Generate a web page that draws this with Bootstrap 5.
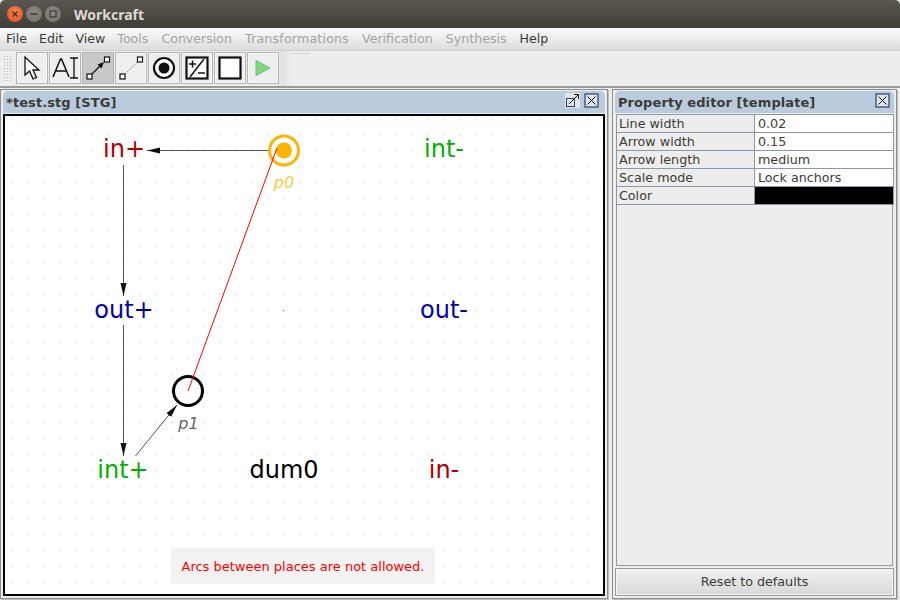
<!DOCTYPE html>
<html lang="en">
<head>
  <meta charset="UTF-8" />
  <meta name="viewport" content="width=device-width, initial-scale=1" />
  <title>Workcraft</title>
  <link href="https://cdn.jsdelivr.net/npm/bootstrap@5.3.2/dist/css/bootstrap.min.css" rel="stylesheet" />
  <style>
    html, body { height: 100%; }
    body { width: 900px; height: 600px; overflow: hidden; background: #ededed; font-family: "DejaVu Sans", sans-serif; font-size: 13px; color: #3c3b37; }
    /* window title */
    .wc-title { height: 28px; background: linear-gradient(#5a5750, #3f3d37); padding-left: 7px; border-radius: 5px 5px 0 0; }
    .wc-title-text { font-family: "Noto Sans", sans-serif; font-weight: 700; font-size: 14px; color: #dfdbd2; margin-left: 10px; }
    .wc-light { width: 16px; height: 16px; border-radius: 50%; margin-right: 3px; display: flex; }
    .wc-light-close { background: radial-gradient(circle at 50% 40%, #f28a5c, #dd4814); }
    .wc-light-other { background: radial-gradient(circle at 50% 40%, #8f8c84, #6f6c65); }
    /* menu */
    .wc-menu { height: 23px; background: linear-gradient(#fbfbfb, #dcdcdc); padding-left: 6px; gap: 13px; line-height: 22px; border-bottom: 1px solid #cfcfcf; font-size: 12.6px; }
    .wc-menu a { color: #3c3b37; text-decoration: none; }
    .wc-menu a.wc-off { color: #a3a3a0; }
    .wc-menu a.wc-tight { margin-left: -1px; }
    .wc-menu a.wc-wide { letter-spacing: .2px; }
    /* toolbar */
    .wc-toolbar { height: 37px; border-bottom: 2px solid #9a9a9a; background: #ededed; }
    .wc-toolbar-strip { width: 292px; height: 35px; background: linear-gradient(90deg, #ededed 275px, #e2e2e2 282px, #ededed 292px); padding: 1px 0 0 3px; }
    .wc-toolbar-line { width: 18px; height: 1px; margin-top: 2px; background: #d4d4d4; }
    .wc-grip { width: 10px; height: 28px; margin: 3px 3px 0 0; background-image: radial-gradient(#b5b5b5 40%, transparent 45%); background-size: 3px 3px; }
    .wc-tool { width: 32px; height: 32px; padding: 0; margin-right: 1px; border: 1px solid #b4b4b4; border-radius: 0; background: #eeeeee; display: flex; align-items: center; justify-content: center; box-shadow: inset 0 0 0 1px #f6f6f6; }
    .wc-tool-on { background: #c8c8c8; box-shadow: none; }
    /* dock panels */
    .wc-dock { height: 512px; padding: 1px 0; gap: 4px; }
    .wc-panel { border: 1px solid #8e8e8e; border-radius: 0; background: #ededed; padding: 1px 2px 2px; box-shadow: 1px 1px 0 #bdbdbd; }
    .wc-panel-left { width: 608px; }
    .wc-panel-right { width: 285px; }
    .wc-panel-right .wc-head { padding-right: 4px; }
    .wc-head { flex: none; height: 22px; background: #b9cbdc; border: 0; border-radius: 0; padding: 1px 6px 0 3px; font-weight: 700; color: #3c3b37; }
    .wc-head-name { letter-spacing: .08px; }
    .wc-canvas { position: relative; flex: none; height: 482px; margin-top: 1px; border: 2px solid #000; background: #fff; }
    .wc-canvas svg { display: block; }
    .wc-note { position: absolute; left: 166px; top: 432px; width: 264px; height: 36px; line-height: 38px; text-align: center; background: #f2f2f2; border-radius: 2px; color: #f00; font-size: 13px; }
    .wc-lbl { font-family: "DejaVu Sans", sans-serif; font-size: 24px; text-anchor: middle; }
    .wc-tag { font-family: "DejaVu Sans", sans-serif; font-size: 16px; font-style: italic; text-anchor: middle; }
    .wc-win-btn { width: 15px; height: 15px; display: block; margin-bottom: 4px; }
    /* property table */
    .wc-props { border: 1px solid #9a9a9a; margin: 1px 1px 0; }
    .wc-props table { margin: -1px 0 0 -1px; width: 278px; table-layout: fixed; border-color: #8b98a5; --bs-table-bg: transparent; --bs-table-color: #3c3b37; }
    .wc-props td { padding: 0 2px; height: 18px; line-height: 17px; font-size: 12.7px; border: 1px solid #8b98a5; }
    .wc-props td.wc-val { background: #fff; padding-left: 3px; }
    .wc-props td.wc-black { background: #000; }
    .wc-reset { flex: none; height: 28px; border: 1px solid #9a9a9a; border-radius: 0; padding: 0; margin-top: 2px; font-size: 12.7px; color: #3c3b37; background: linear-gradient(#f0f0f0, #d8d8d8); box-shadow: inset 0 0 0 1px #f4f4f4; }
  </style>
</head>
<body>
  <!-- window title bar -->
  <div class="wc-title d-flex align-items-center">
    <span class="wc-light wc-light-close align-items-center justify-content-center">
      <svg width="8" height="8" viewBox="0 0 8 8"><path d="M1.5 1.5l5 5M6.5 1.5l-5 5" stroke="#5a2008" stroke-width="1.3"/></svg>
    </span>
    <span class="wc-light wc-light-other align-items-center justify-content-center">
      <svg width="8" height="8" viewBox="0 0 8 8"><path d="M0.5 4h7" stroke="#3f3d37" stroke-width="1.6"/></svg>
    </span>
    <span class="wc-light wc-light-other align-items-center justify-content-center">
      <svg width="8" height="8" viewBox="0 0 8 8"><rect x="1" y="1" width="6" height="6" fill="none" stroke="#3f3d37" stroke-width="1.3"/></svg>
    </span>
    <span class="wc-title-text">Workcraft</span>
  </div>

  <!-- menu -->
  <div class="wc-menu d-flex">
    <a href="#">File</a><a href="#" class="wc-tight">Edit</a><a href="#" class="wc-tight">View</a>
    <a href="#" class="wc-off wc-tight">Tools</a><a href="#" class="wc-off">Conversion</a><a href="#" class="wc-off wc-wide">Transformations</a>
    <a href="#" class="wc-off">Verification</a><a href="#" class="wc-off">Synthesis</a><a href="#">Help</a>
  </div>

  <!-- toolbar -->
  <div class="wc-toolbar d-flex">
    <div class="wc-toolbar-strip d-flex">
      <div class="wc-grip"></div>
      <button class="btn wc-tool" type="button">
        <svg width="20" height="26" viewBox="0 0 20 26"><path d="M3 2l0 18 4.500-4 3.500 8 3.500-1.500-3.500-7.500 6 0z" fill="#f4f4f4" stroke="#111" stroke-width="1.300"/></svg>
      </button>
      <button class="btn wc-tool" type="button">
        <svg width="28" height="26" viewBox="0 0 28 26"><path d="M2 22L9.500 4h1L18 22M5 16h11" fill="none" stroke="#111" stroke-width="1.500"/><path d="M23 3v20M19 3h8M19 23h8" fill="none" stroke="#111" stroke-width="1.300"/></svg>
      </button>
      <button class="btn wc-tool wc-tool-on" type="button">
        <svg width="26" height="26" viewBox="0 0 26 26"><rect x="2" y="19" width="5" height="5" fill="#fff" stroke="#111" stroke-width="1.200"/><rect x="19.500" y="2" width="5" height="5" fill="#fff" stroke="#111" stroke-width="1.200"/><path d="M7 19l8-8" stroke="#111" stroke-width="1.200"/><path d="M19 7l-6.500 2.500 4 4z" fill="#111"/></svg>
      </button>
      <button class="btn wc-tool" type="button">
        <svg width="26" height="26" viewBox="0 0 26 26"><rect x="2" y="19" width="5" height="5" fill="#fff" stroke="#111" stroke-width="1.200"/><rect x="19.500" y="2" width="5" height="5" fill="#fff" stroke="#111" stroke-width="1.200"/><path d="M7 19L19.500 7" stroke="#777" stroke-width="1" stroke-dasharray="1.500 1.500"/></svg>
      </button>
      <button class="btn wc-tool" type="button">
        <svg width="24" height="24" viewBox="0 0 24 24"><circle cx="12" cy="12" r="10" fill="#fff" stroke="#111" stroke-width="2.200"/><circle cx="12" cy="12" r="5.500" fill="#111"/></svg>
      </button>
      <button class="btn wc-tool" type="button">
        <svg width="24" height="24" viewBox="0 0 24 24"><rect x="1.500" y="1.500" width="21" height="21" fill="#fff" stroke="#111" stroke-width="2.200"/><path d="M4 8h7M7.500 4.500v7M13 17h7" stroke="#111" stroke-width="1.500"/><path d="M19 3L5 21" stroke="#111" stroke-width="1.500"/></svg>
      </button>
      <button class="btn wc-tool" type="button">
        <svg width="24" height="24" viewBox="0 0 24 24"><rect x="1.500" y="1.500" width="21" height="21" fill="#fff" stroke="#111" stroke-width="2.200"/></svg>
      </button>
      <button class="btn wc-tool" type="button">
        <svg width="16" height="18" viewBox="0 0 16 18"><path d="M1 1.500l14 7.500-14 7.500z" fill="#7fd67f" stroke="#6cc46c"/></svg>
      </button>
    </div>
    <div class="wc-toolbar-line"></div>
  </div>

  <div class="wc-dock d-flex">
    <!-- editor -->
    <div class="card wc-panel wc-panel-left">
      <div class="card-header wc-head d-flex align-items-center justify-content-between">
        <span class="wc-head-name">*test.stg [STG]</span>
        <span class="d-flex gap-1">
          <svg class="wc-win-btn" viewBox="0 0 15 15"><rect width="15" height="15" fill="#dfe5ea"/><rect x="1.500" y="5.500" width="8" height="8" fill="#dfe5ea" stroke="#2c3e6c"/><path d="M4 11L13 2M9 1.500h4.500V6" fill="none" stroke="#111"/></svg>
          <svg class="wc-win-btn" viewBox="0 0 15 15"><rect x="1" y="1" width="13" height="13" fill="#dfe5ea" stroke="#2c3e6c" stroke-width="1.200"/><path d="M3.500 3.500l8 8M11.500 3.500l-8 8" stroke="#111"/></svg>
        </span>
      </div>
      <div class="wc-canvas">
        <!-- viewBox in screen coordinates -->
        <svg width="598" height="478" viewBox="5 116 598 478">
          <defs>
            <pattern id="dots" x="90" y="133" width="16" height="16" patternUnits="userSpaceOnUse">
              <path d="M0 1.500h3M1.500 0v3" stroke="#eeeeee" stroke-width="1"/>
            </pattern>
            <marker id="tip" markerWidth="13" markerHeight="7" refX="13" refY="3.500" orient="auto" markerUnits="userSpaceOnUse"><path d="M0 0.500L13 3.500 0 6.500z" fill="#111"/></marker>
          </defs>
          <rect x="5" y="116" width="598" height="478" fill="url(#dots)"/>

          <path d="M269 150.500H147" stroke="#555" marker-end="url(#tip)"/>
          <path d="M123.500 165V296" stroke="#555" marker-end="url(#tip)"/>
          <path d="M123.500 325V456" stroke="#555" marker-end="url(#tip)"/>
          <path d="M135.500 456L177 405" stroke="#555" marker-end="url(#tip)"/>

          <circle cx="284" cy="150.500" r="14.500" fill="#fff" stroke="#ffb400" stroke-width="3"/>
          <circle cx="284" cy="150.500" r="8" fill="#ffb400"/>
          <circle cx="188" cy="391" r="14.500" fill="#fff" stroke="#000" stroke-width="3"/>
          <path d="M277 148L188 391" stroke="#f00" stroke-width="1"/>
          <circle cx="283.500" cy="310.500" r="0.800" fill="#999"/>

          <text class="wc-lbl" x="124" y="157" fill="#b00000">in+</text>
          <text class="wc-lbl" x="444" y="157" fill="#00b000">int-</text>
          <text class="wc-lbl" x="124" y="318" fill="#0000b0">out+</text>
          <text class="wc-lbl" x="444" y="318" fill="#0000b0">out-</text>
          <text class="wc-lbl" x="123" y="478" fill="#00b000">int+</text>
          <text class="wc-lbl" x="284" y="478" fill="#000">dum0</text>
          <text class="wc-lbl" x="444" y="478" fill="#b00000">in-</text>
          <text class="wc-tag" x="284" y="188" fill="#ffc94d">p0</text>
          <text class="wc-tag" x="188.500" y="429" fill="#666">p1</text>
        </svg>
        <div class="wc-note">Arcs between places are not allowed.</div>
      </div>
    </div>

    <!-- property editor -->
    <div class="card wc-panel wc-panel-right">
      <div class="card-header wc-head d-flex align-items-center justify-content-between">
        <span class="wc-head-name">Property editor [template]</span>
        <svg class="wc-win-btn" viewBox="0 0 15 15"><rect x="1" y="1" width="13" height="13" fill="#dfe5ea" stroke="#2c3e6c" stroke-width="1.200"/><path d="M3.500 3.500l8 8M11.500 3.500l-8 8" stroke="#111"/></svg>
      </div>
      <div class="wc-props flex-grow-1">
        <table class="table table-bordered">
          <colgroup><col style="width:138px"><col></colgroup>
          <tbody>
            <tr><td>Line width</td><td class="wc-val">0.02</td></tr>
            <tr><td>Arrow width</td><td class="wc-val">0.15</td></tr>
            <tr><td>Arrow length</td><td class="wc-val">medium</td></tr>
            <tr><td>Scale mode</td><td class="wc-val">Lock anchors</td></tr>
            <tr><td>Color</td><td class="wc-black"></td></tr>
          </tbody>
        </table>
      </div>
      <button class="btn wc-reset" type="button">Reset to defaults</button>
    </div>
  </div>
  <script src="https://cdn.jsdelivr.net/npm/bootstrap@5.3.2/dist/js/bootstrap.bundle.min.js"></script>
</body>
</html>
